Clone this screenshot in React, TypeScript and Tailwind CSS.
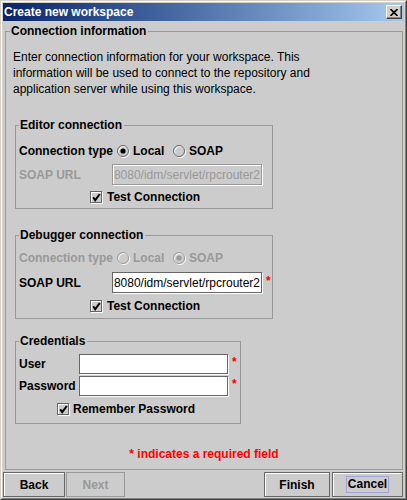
import React from "react";

function Radio({ checked, disabled }: { checked?: boolean; disabled?: boolean }) {
  const ring = disabled ? "#999999" : "#666666";
  const dot = disabled ? "#999999" : "#000000";
  return (
    <svg width="13" height="13" viewBox="0 0 13 13" className="shrink-0">
      <circle cx="7" cy="7" r="5.5" fill="none" stroke="#ffffff" />
      <circle cx="6" cy="6" r="5.5" fill="none" stroke={ring} />
      {checked && <circle cx="6" cy="6" r="2.6" fill={dot} />}
    </svg>
  );
}

function Check() {
  return (
    <svg width="13" height="13" viewBox="0 0 13 13" className="shrink-0">
      <rect x="1.5" y="1.5" width="11" height="11" fill="none" stroke="#ffffff" />
      <rect x="0.5" y="0.5" width="11" height="11" fill="none" stroke="#666666" />
      <path d="M3.2 6.2 L5.2 9.2 L9.8 3" stroke="#000000" strokeWidth="2" fill="none" />
    </svg>
  );
}

function Star() {
  return <span className="ml-[4px] text-[12px] font-bold text-[#ff0000] leading-none -mt-[4px]">*</span>;
}

function Group({
  title,
  className,
  legendClass,
  children,
}: {
  title: string;
  className: string;
  legendClass: string;
  children?: React.ReactNode;
}) {
  return (
    <fieldset className={`m-0 p-0 min-w-0 border border-[#999999] ${className}`}>
      <legend className={`pl-[1px] pr-[2px] text-[12px] leading-[16px] font-bold text-black ${legendClass}`}>
        {title}
      </legend>
      {children}
    </fieldset>
  );
}

function UrlField({ disabled }: { disabled?: boolean }) {
  return (
    <div
      className={
        disabled
          ? "w-[150px] h-[21px] shrink-0 border border-[#999999] bg-[#cccccc] shadow-[inset_1px_1px_0_#ffffff,1px_1px_0_#ffffff] overflow-hidden flex items-center justify-end"
          : "w-[150px] h-[21px] shrink-0 border border-[#666666] bg-white shadow-[1px_1px_0_#ffffff] overflow-hidden flex items-center justify-end"
      }
    >
      <span
        className={`whitespace-nowrap text-[12px] leading-[16px] pr-[1px] ${
          disabled ? "text-[#999999]" : "text-black"
        }`}
      >
        8080/idm/servlet/rpcrouter2
      </span>
    </div>
  );
}

function ConnGroup({
  title,
  debuggerMode,
}: {
  title: string;
  debuggerMode?: boolean;
}) {
  const dis = !!debuggerMode;
  return (
    <Group
      title={title}
      className={dis ? "mt-[18px] ml-[9px] w-[258px] h-[92px]" : "mt-[20px] ml-[9px] w-[258px] h-[92px]"}
      legendClass="ml-[3px]"
    >
      <div
        className={`${dis ? "mt-[5px]" : "mt-[8px]"} ml-[3px] h-[20px] flex items-center text-[12px] font-bold ${
          dis ? "text-[#999999]" : "text-black"
        }`}
      >
        <span className="w-[98px] shrink-0 whitespace-nowrap">Connection type</span>
        <div className="w-[56px] flex items-center">
          <Radio checked={!dis} disabled={dis} />
          <span className="ml-[3px]">Local</span>
        </div>
        <div className="flex items-center">
          <Radio checked={dis} disabled={dis} />
          <span className="ml-[3px]">SOAP</span>
        </div>
      </div>
      <div className={`${dis ? "mt-[4px]" : "mt-[3px]"} ml-[3px] h-[21px] flex items-center`}>
        <span
          className={`w-[93px] shrink-0 text-[12px] font-bold whitespace-nowrap ${
            dis ? "text-black" : "text-[#999999]"
          }`}
        >
          SOAP URL
        </span>
        <UrlField disabled={!dis} />
        {dis && <Star />}
      </div>
      <div className={`${dis ? "mt-[5px]" : "mt-[4px]"} ml-[74px] h-[16px] flex items-center`}>
        <Check />
        <span className="ml-[4px] text-[12px] font-bold text-black whitespace-nowrap">Test Connection</span>
      </div>
    </Group>
  );
}

function CredField() {
  return <div className="w-[149px] h-[20px] shrink-0 border border-[#666666] bg-white shadow-[1px_1px_0_#ffffff]" />;
}

export default function App() {
  return (
    <div className="w-[407px] h-[500px] font-['Liberation_Sans',Arial,sans-serif] bg-[#d4d0c8] border border-t-[#d4d0c8] border-l-[#d4d0c8] border-r-[#404040] border-b-[#404040]">
      <div className="h-full p-px flex flex-col border border-t-white border-l-white border-r-[#808080] border-b-[#808080]">
        {/* Title bar */}
        <div className="h-[18px] shrink-0 flex items-start bg-linear-to-r from-[#0a246a] to-[#a6caf0]">
          <span className="flex-1 pl-[1px] text-white font-bold text-[12px] leading-[18px] whitespace-nowrap">
            Create new workspace
          </span>
          <div className="mt-[2px] mr-[2px] w-[16px] h-[14px] bg-[#d4d0c8] border border-t-white border-l-white border-r-[#404040] border-b-[#404040] shadow-[inset_-1px_-1px_0_#808080] flex items-center justify-center">
            <svg width="8" height="7" viewBox="0 0 8 7">
              <path d="M0.5 0 L7.5 7 M7.5 0 L0.5 7" stroke="#000" strokeWidth="1.6" />
            </svg>
          </div>
        </div>

        {/* Content */}
        <div className="flex-1 bg-[#cccccc] flex flex-col">
          <Group
            title="Connection information"
            className="mt-[2px] ml-[2px] mr-px h-[447px]"
            legendClass="ml-[4px]"
          >
            <p className="mt-[10px] ml-[7px] text-[12px] leading-[16px] text-black">
              Enter connection information for your workspace. This
              <br />
              information will be used to connect to the repository and
              <br />
              application server while using this workspace.
            </p>

            <ConnGroup title="Editor connection" />
            <ConnGroup title="Debugger connection" debuggerMode />

            <Group title="Credentials" className="mt-[14px] ml-[9px] w-[226px] h-[91px]" legendClass="ml-[3px]">
              <div className="mt-[5px] ml-[3px] h-[20px] flex items-center">
                <span className="w-[60px] shrink-0 text-[12px] font-bold text-black">User</span>
                <CredField />
                <Star />
              </div>
              <div className="mt-[2px] ml-[3px] h-[20px] flex items-center">
                <span className="w-[60px] shrink-0 text-[12px] font-bold text-black whitespace-nowrap">
                  Password
                </span>
                <CredField />
                <Star />
              </div>
              <div className="mt-[5px] ml-[41px] h-[16px] flex items-center">
                <Check />
                <span className="ml-[3px] text-[12px] font-bold text-black whitespace-nowrap">
                  Remember Password
                </span>
              </div>
            </Group>

            <div className="mt-[22px] h-[16px] text-center text-[12px] leading-[16px] font-bold text-[#ff0000]">
              * indicates a required field
            </div>
          </Group>

          {/* Buttons */}
          <div className="mt-[2px] h-[25px] flex text-[12px] font-bold">
            <div className="w-[62px] h-full border border-[#666666] shadow-[inset_1px_1px_0_#ffffff] flex items-center justify-center text-black">
              Back
            </div>
            <div className="ml-px w-[59px] h-full border border-[#999999] flex items-center justify-center text-[#999999]">
              Next
            </div>
            <div className="flex-1" />
            <div className="w-[66px] h-full border border-[#666666] shadow-[inset_1px_1px_0_#ffffff] flex items-center justify-center text-black">
              Finish
            </div>
            <div className="ml-[2px] mr-px w-[71px] h-full border border-[#666666] shadow-[inset_1px_1px_0_#ffffff] flex items-center justify-center text-black">
              <span className="border border-[#a3a3d9] px-[1px] leading-[15px]">Cancel</span>
            </div>
          </div>
        </div>
      </div>
    </div>
  );
}
